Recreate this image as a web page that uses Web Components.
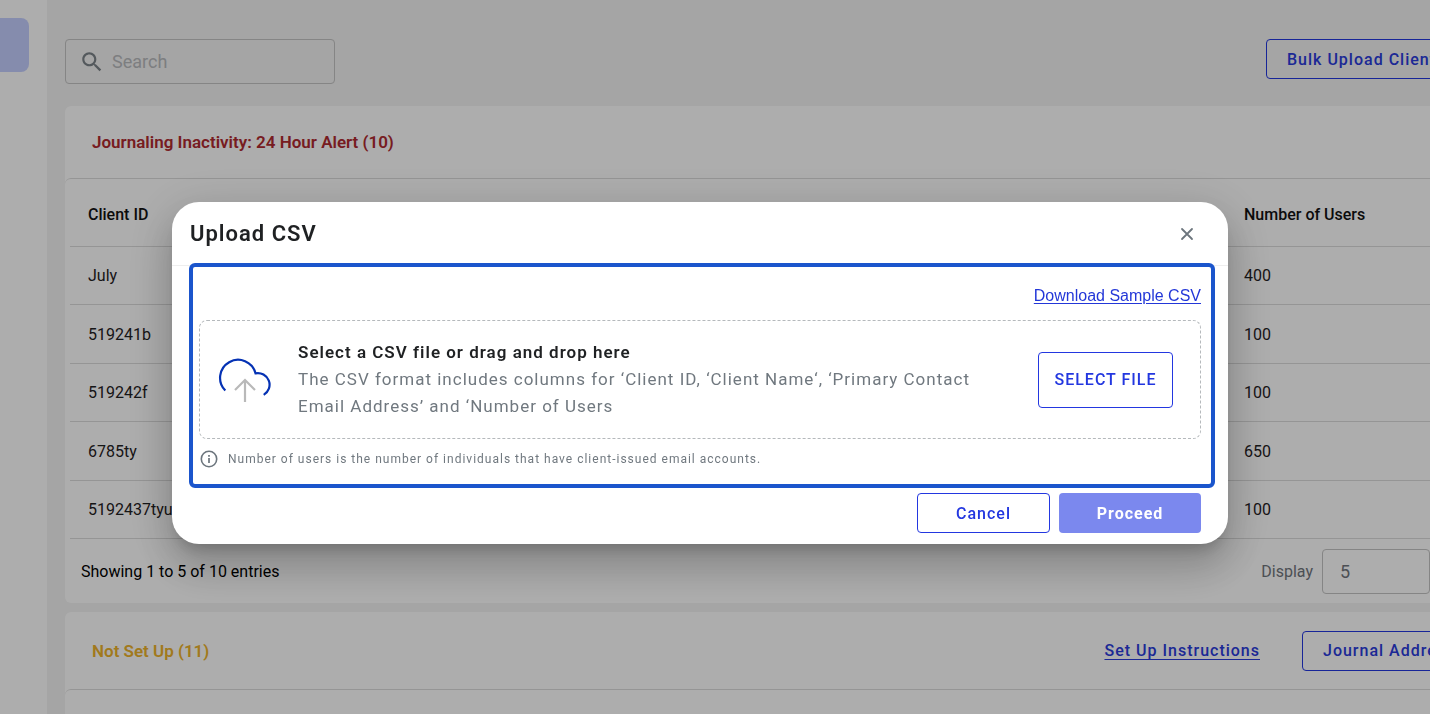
<!DOCTYPE html>
<html lang="en">
<head>
<meta charset="utf-8">
<title>Clients – Upload CSV</title>
<style>
  html, body { height: 100%; margin: 0; overflow: hidden; }
  body { font-family: Roboto, "Liberation Sans", sans-serif; font-size: 16px; color: #1f2123; background: #f3f3f3; }
</style>
</head>
<body>
<app-shell>
  <search-box slot="top"></search-box>
  <outline-button slot="top" class="bulk">Bulk Upload Clients</outline-button>

  <client-card tone="alert">
    <span slot="title">Journaling Inactivity: 24 Hour Alert (10)</span>
    <client-table></client-table>
    <table-footer></table-footer>
  </client-card>

  <client-card tone="pending">
    <span slot="title">Not Set Up (11)</span>
    <text-link slot="actions">Set Up Instructions</text-link>
    <outline-button slot="actions" class="journal">Journal Address</outline-button>
  </client-card>
</app-shell>

<upload-dialog></upload-dialog>

<script>
const define = (name, html, setup) => customElements.define(name, class extends HTMLElement {
  constructor() {
    super();
    this.attachShadow({ mode: 'open' }).innerHTML = html;
  }
  connectedCallback() { if (setup) setup(this, this.shadowRoot); }
});

define('app-shell', `
  <style>
    :host { display: flex; height: 100vh; overflow: hidden; }
    nav { flex: none; width: 47px; padding-top: 18px; box-sizing: border-box; background: #fff; }
    nav a { display: block; width: 29px; height: 54px; border-radius: 0 8px 8px 0; background: #c5cfff; }
    main { flex: 1; min-width: 0; margin-right: -64px; padding-left: 18px; }
    header { display: flex; justify-content: space-between; align-items: flex-start; padding: 39px 24px 22px 0; }
    .cards { display: flex; flex-direction: column; gap: 9px; }
    ::slotted(.bulk) { width: 204px; }
  </style>
  <nav aria-label="Main"><a href="#clients" aria-label="Clients"></a></nav>
  <main>
    <header><slot name="top"></slot></header>
    <div class="cards"><slot></slot></div>
  </main>`);

define('search-box', `
  <style>
    :host { display: block; }
    label { display: flex; align-items: center; gap: 7px; box-sizing: border-box; width: 270px; height: 45px; padding: 0 12px 0 13px; border: 1px solid #c4c4c4; border-radius: 4px; }
    svg { flex: none; width: 26px; height: 26px; fill: #7c8389; }
    input { flex: 1; min-width: 0; padding: 0; border: 0; outline: 0; background: none; font: inherit; font-size: 18px; color: #1f2123; }
    input::placeholder { color: #b8babd; opacity: 1; }
  </style>
  <label>
    <svg viewBox="0 0 24 24" aria-hidden="true"><path d="M15.5 14h-.79l-.28-.27C15.41 12.59 16 11.11 16 9.5 16 5.91 13.09 3 9.5 3S3 5.91 3 9.5 5.91 16 9.5 16c1.61 0 3.09-.59 4.23-1.57l.27.28v.79l5 4.99L20.49 19l-4.99-5zm-6 0C7.01 14 5 11.99 5 9.5S7.01 5 9.5 5 14 7.01 14 9.5 11.99 14 9.5 14z"/></svg>
    <input type="search" placeholder="Search" aria-label="Search">
  </label>`);

define('outline-button', `
  <style>
    :host { display: block; }
    button { display: block; width: 100%; height: 40px; padding: 0 20px; border: 1px solid #2337e0; border-radius: 4px; background: none; color: #2a3bdc; font: inherit; font-weight: 500; letter-spacing: 1px; text-align: left; white-space: nowrap; }
  </style>
  <button type="button"><slot></slot></button>`);

define('text-link', `
  <style>
    :host { display: block; }
    a { color: #2a3bdc; font-weight: 500; letter-spacing: 1px; text-decoration: underline; text-underline-offset: 3px; }
  </style>
  <a href="#instructions"><slot></slot></a>`);

define('client-card', `
  <style>
    :host { display: block; background: #fff; border-radius: 6px; }
    :host([tone="alert"]) { --tone: #b02a30; --header: 72px; }
    :host([tone="pending"]) { --tone: #eeb32b; --header: 77px; }
    header { display: flex; align-items: center; gap: 42px; height: var(--header); padding: 0 24px 0 27px; }
    h2 { flex: 1; margin: 0; color: var(--tone); font-size: 17px; font-weight: 600; }
    section { min-height: 60px; border-top: 1px solid #dcdcdc; border-radius: 6px; }
    ::slotted(.journal) { width: 168px; }
  </style>
  <header><h2><slot name="title"></slot></h2><slot name="actions"></slot></header>
  <section><slot></slot></section>`);

define('client-table', `
  <style>
    :host { display: block; padding-left: 5px; }
    table { width: 100%; table-layout: fixed; border-collapse: separate; border-spacing: 0; }
    th, td { box-sizing: border-box; height: 59px; padding: 0 18px; border-bottom: 1px solid #dcdcdc; text-align: left; font-weight: 400; }
    th { height: 68px; padding-top: 4px; font-weight: 500; color: #111; }
    th + th { width: 250px; padding-left: 0; }
    td + td { padding-left: 0; }
    tr:nth-child(odd) td { height: 58px; }
  </style>
  <table>
    <thead><tr><th scope="col">Client ID</th><th scope="col">Number of Users</th></tr></thead>
    <tbody></tbody>
  </table>`,
  (host, root) => {
    const body = root.querySelector('tbody');
    const clients = [['July', 400], ['519241b', 100], ['519242f', 100], ['6785ty', 650], ['5192437tyu', 100]];
    body.innerHTML = clients.map(([id, users]) => `<tr><td>${id}</td><td>${users}</td></tr>`).join('');
  });

define('table-footer', `
  <style>
    :host { display: flex; align-items: center; justify-content: space-between; height: 64px; padding: 0 64px 0 16px; color: #000; }
    label { display: flex; align-items: center; gap: 9px; color: #70757c; }
    select { appearance: none; box-sizing: border-box; width: 108px; height: 45px; padding: 0 17px; border: 1px solid #c4c4c4; border-radius: 4px; background: none; color: #70757c; font: inherit; font-size: 18px; }
  </style>
  <span>Showing 1 to 5 of 10 entries</span>
  <label>Display <select><option>5</option></select></label>`);

define('upload-dialog', `
  <style>
    :host { position: fixed; inset: 0; display: flex; align-items: center; justify-content: center; padding: 32px 30px 0 0; background: rgba(0, 0, 0, .32); }
    [role=dialog] { width: 1056px; max-width: 100%; border-radius: 27px; background: #fff; box-shadow: 0 11px 15px -7px rgba(0,0,0,.2), 0 24px 38px 3px rgba(0,0,0,.14), 0 9px 46px 8px rgba(0,0,0,.12); }
    header { display: flex; align-items: center; justify-content: space-between; height: 63px; padding: 0 29px 0 18px; border-bottom: 1px solid #eee; }
    h1 { margin: 0; font-size: 22px; font-weight: 600; letter-spacing: 1px; }
    button { font: inherit; border-radius: 4px; letter-spacing: 1px; }
    .close { display: grid; place-items: center; width: 24px; height: 24px; padding: 0; border: 0; background: none; }
    .content { margin: -3px 13px 0 17px; padding: 19px 10px 14px 6px; border: 4px solid #1b55cc; border-radius: 6px; }
    .sample { display: flex; justify-content: flex-end; font-family: "Liberation Sans", sans-serif; line-height: 20px; margin-bottom: 14px; }
    .sample a { color: #2337d8; text-underline-offset: 2px; }
    .drop { display: flex; align-items: center; box-sizing: border-box; height: 119px; padding: 0 27px 0 17px; border: 1px dashed #b5b9bc; border-radius: 8px; }
    .cloud { flex: none; width: 56px; height: 48px; margin-right: 25px; }
    .copy { flex: 1; min-width: 0; margin-right: 40px; }
    .copy h2, .copy p { margin: 0; font-size: 17px; line-height: 27px; letter-spacing: 1px; }
    .copy h2 { font-weight: 600; }
    .copy p { color: #70787f; }
    .select { width: 135px; height: 56px; padding: 0; border: 1px solid #2337e0; background: #fff; color: #2337e0; font-weight: 500; }
    .note { display: flex; align-items: center; gap: 9px; margin: 9px 0 0; font-size: 12px; line-height: 22px; letter-spacing: 1px; color: #70787f; }
    .note svg { flex: none; width: 20px; height: 20px; }
    footer { display: flex; justify-content: flex-end; gap: 9px; padding: 5px 27px 11px; }
    footer button { height: 40px; padding: 0; }
    .cancel { width: 133px; border: 1px solid #2337e0; background: #fff; color: #2337e0; font-weight: 500; }
    .proceed { width: 142px; border: 0; background: #7b88ee; color: #fff; font-weight: 700; }
  </style>
  <div role="dialog" aria-modal="true" aria-labelledby="title">
    <header>
      <h1 id="title">Upload CSV</h1>
      <button class="close" type="button" aria-label="Close">
        <svg width="14" height="14" viewBox="0 0 14 14" fill="none" stroke="#6c757d" stroke-width="1.8" stroke-linecap="round"><path d="M2 2l10 10M12 2L2 12"/></svg>
      </button>
    </header>
    <section class="content">
      <div class="sample"><a href="#sample">Download Sample CSV</a></div>
      <div class="drop">
        <svg class="cloud" viewBox="0 0 56 48" fill="none" aria-hidden="true">
          <path d="M8.300 34.500A18 18 0 1 1 38.500 17.300A11.700 11.700 0 0 1 46.700 38.900" stroke="#0532b4" stroke-width="2.200"/>
          <path d="M28 46V24M18 34L28 24L38 34" stroke="#b9b9b9" stroke-width="2.200"/>
        </svg>
        <div class="copy">
          <h2>Select a CSV file or drag and drop here</h2>
          <p>The CSV format includes columns for ‘Client ID, ‘Client Name‘, ‘Primary Contact Email Address’ and ‘Number of Users</p>
        </div>
        <button class="select" type="button">SELECT FILE</button>
      </div>
      <p class="note">
        <svg viewBox="0 0 20 20" fill="none" stroke="#6c757d" aria-hidden="true"><circle cx="10" cy="10" r="7.700" stroke-width="1.600"/><path d="M10 9v5M10 6v1.700" stroke-width="1.700"/></svg>
        Number of users is the number of individuals that have client-issued email accounts.
      </p>
    </section>
    <footer>
      <button class="cancel" type="button">Cancel</button>
      <button class="proceed" type="button">Proceed</button>
    </footer>
  </div>`);
</script>
</body>
</html>
